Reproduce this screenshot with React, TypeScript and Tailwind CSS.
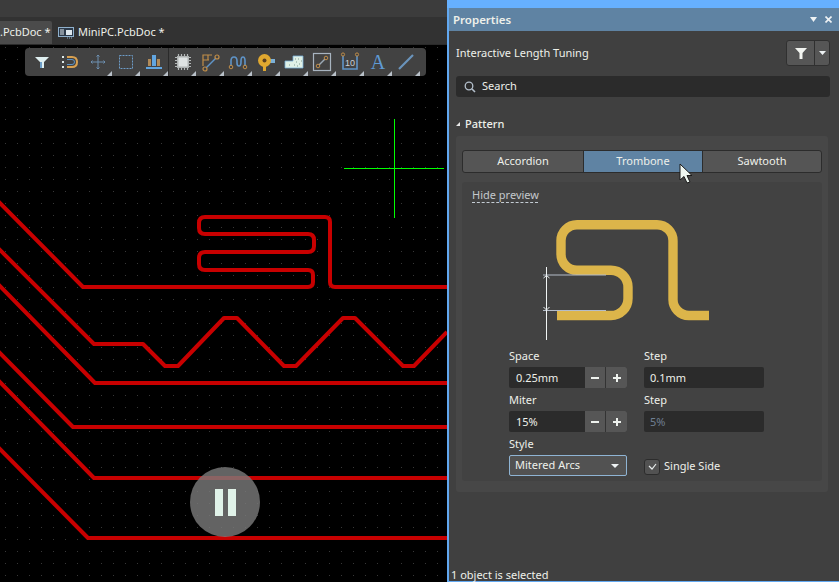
import { ReactNode } from 'react';

const traces = [
  'M-3 200 L83 287 H308 Q313 287 313 282 V275 Q313 270 308 270 H205 Q199 270 199 264 V258 Q199 252 205 252 H308 Q314 252 314 246 V240 Q314 234 308 234 H205 Q199 234 199 228 V223 Q199 217 205 217 H325 Q330 217 330 222 V282 Q330 287 335 287 H447',
  'M-3 247 L94 344 H143 L165 366 H178 L224 318 H237 L284 366 H296 L343 318 H355 L403 366 H414 L447 332',
  'M-3 283 L95 383 H447',
  'M-3 350 L73 427 H447',
  'M-3 379 L94 478 H447',
  'M-3 446 L88 538 H447',
];

function Tool({ children, menu = true, sep = false }: { children: ReactNode; menu?: boolean; sep?: boolean }) {
  return (
    <div className={`relative w-[28px] h-[28px] flex items-center justify-center ${sep ? 'border-l border-[#2a2a2a]' : ''}`}>
      <svg width="22" height="22" viewBox="0 0 22 22" fill="none">{children}</svg>
      {menu && (
        <svg width="5" height="5" viewBox="0 0 5 5" className="absolute right-0 bottom-0">
          <polygon points="5,0 5,5 0,5" fill="#b8c0c8" />
        </svg>
      )}
    </div>
  );
}

function Toolbar() {
  return (
    <div className="absolute left-[25px] top-[3px] w-[401px] h-[28px] pl-[3px] bg-[#424242] rounded-[4px] flex">
      <Tool menu={false}>
        <path d="M4 6 H18 L13 11 V17 H9 V11 Z" fill="#dfeff0" />
        <path d="M9 11 V17 H11 V11 Z" fill="#6f9fc8" />
      </Tool>
      <Tool menu={false}>
        <path d="M8 6 H13 Q18 6 18 11 Q18 16 13 16 H8" stroke="#d8a050" strokeWidth="2" />
        <path d="M8 8.5 H13 Q15.5 8.5 15.5 11 Q15.5 13.5 13 13.5 H8" stroke="#5b93c7" strokeWidth="1" />
        <path d="M3 6 H5 M3 11 H5 M3 16 H5" stroke="#dce8e8" strokeWidth="2" />
      </Tool>
      <Tool>
        <path d="M11 4 V18 M4 11 H18" stroke="#6d8fb0" strokeWidth="1" />
        <path d="M9.5 5.5 L11 4 L12.5 5.5 M9.5 16.5 L11 18 L12.5 16.5 M5.5 9.5 L4 11 L5.5 12.5 M16.5 9.5 L18 11 L16.5 12.5" stroke="#6d8fb0" strokeWidth="1" />
      </Tool>
      <Tool>
        <rect x="4.5" y="4.5" width="13" height="13" stroke="#6d9cc8" strokeDasharray="2 1" />
      </Tool>
      <Tool>
        <rect x="9" y="4" width="4" height="11" fill="#62a6e0" />
        <rect x="5" y="8" width="3" height="7" fill="#b08a58" />
        <rect x="14" y="8" width="3" height="7" fill="#b08a58" />
        <rect x="3" y="16" width="16" height="2" fill="#62a6e0" />
      </Tool>
      <Tool sep>
        <path d="M6.5 3 V19 M9.5 3 V19 M12.5 3 V19 M15.5 3 V19 M3 6.5 H19 M3 9.5 H19 M3 12.5 H19 M3 15.5 H19" stroke="#b4b8b8" strokeWidth="1.2" />
        <rect x="5" y="5" width="12" height="12" fill="#aeb2b2" />
        <rect x="6.5" y="6.5" width="9" height="9" fill="#dfe3e3" />
      </Tool>
      <Tool>
        <path d="M4 15 V4 H13 M4 9 H10 M9 4 V9" stroke="#c08d48" strokeWidth="1.2" />
        <path d="M7 17 L17 7" stroke="#5f94c8" strokeWidth="1.5" />
        <circle cx="6" cy="18" r="2" stroke="#c08d48" strokeWidth="1.2" />
        <circle cx="18" cy="6" r="2" stroke="#c08d48" strokeWidth="1.2" />
      </Tool>
      <Tool>
        <path d="M4 15 V10 Q4 6 7 6 Q10 6 10 10 V12 Q10 15 12 15 Q14 15 14 11 V10 Q14 6 16 6 Q18 6 18 10 V15" stroke="#5f94c8" strokeWidth="1.6" />
        <circle cx="4" cy="16" r="1.8" stroke="#c08d48" />
        <circle cx="18" cy="16" r="1.8" stroke="#c08d48" />
      </Tool>
      <Tool>
        <rect x="12" y="8" width="8" height="4" fill="#7ab0d8" />
        <rect x="8" y="12" width="3" height="8" fill="#e0a830" />
        <circle cx="9.5" cy="9.5" r="6.5" fill="#e0a830" />
        <circle cx="9.5" cy="9.5" r="2" fill="#5a4020" />
      </Tool>
      <Tool>
        <path d="M2 10 H10 V5 H20 V17 H2 Z" fill="#dff0e6" stroke="#7ab0d8" strokeWidth="0.8" />
        <path d="M12 8 h1 M15 8 h1 M18 10 h1 M13 11 h1 M16 13 h1 M11 14 h1 M6 14 h1 M14 15 h1" stroke="#7f9a90" />
      </Tool>
      <Tool>
        <rect x="2.5" y="2.5" width="17" height="17" stroke="#a8b4c0" strokeWidth="1.2" />
        <path d="M8 14 L14 8" stroke="#9aa8b4" strokeWidth="1.5" />
        <circle cx="7" cy="15" r="1.8" stroke="#c08d48" />
        <circle cx="15" cy="7" r="1.8" stroke="#c08d48" />
      </Tool>
      <Tool>
        <path d="M4 5 V18 H18 V5" stroke="#5f94c8" strokeWidth="1.6" />
        <circle cx="4" cy="3.5" r="1.6" stroke="#c08d48" />
        <circle cx="18" cy="3.5" r="1.6" stroke="#c08d48" />
        <text x="11" y="15" textAnchor="middle" fontSize="9" fill="#c8d0d8" className="font-['Liberation_Sans',sans-serif]">10</text>
      </Tool>
      <Tool>
        <text x="11" y="18" textAnchor="middle" fontSize="20" fill="#5f9ad4" className="font-['Liberation_Serif',serif]">A</text>
      </Tool>
      <Tool>
        <path d="M4 18 L18 4" stroke="#6a94bc" strokeWidth="2.2" />
      </Tool>
    </div>
  );
}

function Stepper({ value }: { value: string }) {
  return (
    <div className="flex h-[21px] bg-[#2b2b2b] rounded-[2px] overflow-hidden">
      <div className="flex-1 pl-[7px] leading-[21px]">{value}</div>
      <div className="w-[21px] bg-[#565656] flex items-center justify-center border-r border-[#333]">
        <div className="w-[8px] h-[2px] bg-[#eef2ee]" />
      </div>
      <div className="relative w-[21px] bg-[#565656] flex items-center justify-center">
        <div className="w-[8px] h-[2px] bg-[#eef2ee]" />
        <div className="absolute w-[2px] h-[8px] bg-[#eef2ee]" />
      </div>
    </div>
  );
}

function Label({ children }: { children: ReactNode }) {
  return <div className="h-[14px] mb-[4px] leading-[14px]">{children}</div>;
}

export default function App() {
  return (
    <div className="relative w-[839px] h-[582px] overflow-hidden flex bg-[#404040] text-[11px] text-[#eef0ea] font-['Noto_Sans',sans-serif]">
      {/* Editor */}
      <div className="w-[447px] h-full flex flex-col">
        <div className="h-[17px] bg-[#3c3c3c]" />
        <div className="h-[28px] bg-[#323232] flex items-end border-b border-[#2a2a2a]">
          <div className="w-[52px] h-[23px] bg-[#4b4b4b] rounded-tr-[2px] leading-[22px] text-right pr-[4px] whitespace-nowrap">.PcbDoc *</div>
          <div className="h-[23px] pl-[6px] flex items-center gap-[4px] whitespace-nowrap">
            <svg width="16" height="12" viewBox="0 0 16 12">
              <rect x="0.5" y="0.5" width="15" height="9" fill="#2c3a4a" stroke="#8fb0cc" />
              <path d="M2 3 H6 M2 5 H6 M2 7 H6" stroke="#dfe8ee" />
              <rect x="8" y="3" width="6" height="5" fill="#dfe8ee" />
              <path d="M9 11 H15" stroke="#8fb0cc" strokeDasharray="1 1" />
            </svg>
            MiniPC.PcbDoc *
          </div>
        </div>
        <div className="relative flex-1 bg-black">
          <svg width="447" height="537" viewBox="0 45 447 537" className="block">
            <defs>
              <pattern id="grid" x="5" y="11" width="12" height="12" patternUnits="userSpaceOnUse">
                <rect width="1" height="1" fill="#383838" />
              </pattern>
            </defs>
            <rect x="0" y="45" width="447" height="537" fill="url(#grid)" />
            {traces.map((d) => (
              <path key={d} d={d} fill="none" stroke="#c80000" strokeWidth="4" strokeLinejoin="round" />
            ))}
            <path d="M344 168.5 H444 M394.5 119 V218" stroke="#00ff00" strokeWidth="1" />
          </svg>
          <Toolbar />
          {/* Pause badge */}
          <div className="absolute left-[190px] top-[422px] w-[70px] h-[70px] rounded-full bg-[#7c7c7c]/80 flex items-center justify-center gap-[5px]">
            <div className="w-[8px] h-[27px] bg-[#e0f2e8]" />
            <div className="w-[8px] h-[27px] bg-[#e0f2e8]" />
          </div>
        </div>
      </div>

      {/* Properties panel */}
      <div className="w-[392px] h-full flex flex-col border-l-2 border-b border-[#62a8f0]">
        <div className="h-[8px] -ml-[2px] bg-[#66b0ff]" />
        <div className="h-[23px] bg-[#5f83a3] pl-[4px] pr-[7px] flex items-center justify-between">
          <span className="text-[11.5px] font-semibold">Properties</span>
          <span className="flex items-center gap-[8px]">
            <svg width="7" height="5" viewBox="0 0 7 5"><polygon points="0,0 7,0 3.5,5" fill="#eef2f4" /></svg>
            <svg width="7" height="7" viewBox="0 0 7 7"><path d="M0.5 0.5 L6.5 6.5 M6.5 0.5 L0.5 6.5" stroke="#eef2f4" strokeWidth="1.6" /></svg>
          </span>
        </div>

        <div className="pl-[7px] pr-[9px] flex-1 flex flex-col">
          <div className="mt-[9px] h-[26px] flex items-center justify-between">
            <span>Interactive Length Tuning</span>
            <div className="flex h-[26px] bg-[#565656] border border-[#303030] rounded-[3px]">
              <div className="w-[28px] flex items-center justify-center border-r border-[#303030]">
                <svg width="12" height="11" viewBox="0 0 12 11"><polygon points="0,0 12,0 7.5,5 7.5,11 4.5,11 4.5,5" fill="#f2f4f0" /></svg>
              </div>
              <div className="w-[14px] flex items-center justify-center">
                <svg width="7" height="4" viewBox="0 0 7 4"><polygon points="0,0 7,0 3.5,4" fill="#eef2f4" /></svg>
              </div>
            </div>
          </div>

          <div className="mt-[10px] h-[21px] bg-[#2b2b2b] rounded-[3px] flex items-center pl-[8px] gap-[6px]">
            <svg width="12" height="12" viewBox="0 0 12 12" fill="none">
              <circle cx="5" cy="5" r="3.8" stroke="#b4c0cc" strokeWidth="1.3" />
              <path d="M8 8 L11 11" stroke="#b4c0cc" strokeWidth="1.6" />
            </svg>
            Search
          </div>

          <div className="mt-[20px] h-[14px] flex items-center gap-[5px] font-medium">
            <svg width="4" height="4" viewBox="0 0 4 4"><polygon points="4,0 4,4 0,4" fill="#e8e8e8" /></svg>
            Pattern
          </div>

          <div className="mt-[5px] mr-[2px] h-[356px] bg-[#474747] rounded-[3px] pt-[14px] px-[6px]">
            <div className="h-[23px] grid grid-cols-[120px_120px_1fr] border border-[#2c2c2c] rounded-[3px] overflow-hidden text-center leading-[20px] bg-[#555555]">
              <div>Accordion</div>
              <div className="bg-[#5f83a3] border-x border-[#2c2c2c]">Trombone</div>
              <div>Sawtooth</div>
            </div>

            <div className="mt-[9px] h-[299px] bg-[#424242] rounded-[3px]">
              <div className="pt-[7px] pl-[10px]">
                <span className="block w-[66px] h-[14px] leading-[12px] border-b border-dashed border-[#c4ccd4] text-[#c4c8cc] whitespace-nowrap">Hide preview</span>
              </div>
              <svg width="360" height="140" viewBox="462 203 360 140" fill="none" className="block">
                <path
                  d="M557 315.5 H611 A17 17 0 0 0 628 298.5 V287 A17 17 0 0 0 611 270.3 H577 A16 16 0 0 1 561 254.3 V241 A16 16 0 0 1 577 224.7 H657 A16 16 0 0 1 673 241 V299 A16 16 0 0 0 689 315.5 H709"
                  stroke="#dcb54a"
                  strokeWidth="9.4"
                />
                <path d="M543 275 H606 M543 310.5 H606" stroke="#b4bcc8" strokeWidth="1.2" />
                <path d="M546.5 267 V340" stroke="#f0f4f4" strokeWidth="1" />
                <path d="M543.5 278 L546.5 275.5 L549.5 278 M543.5 307 L546.5 310 L549.5 307" stroke="#e8eef0" strokeWidth="1" />
              </svg>

              <div className="mt-[6px] ml-[47px] w-[255px] grid grid-cols-[118px_120px] gap-x-[17px]">
                <div>
                  <Label>Space</Label>
                  <Stepper value="0.25mm" />
                </div>
                <div>
                  <Label>Step</Label>
                  <div className="h-[21px] bg-[#2b2b2b] rounded-[2px] pl-[6px] leading-[21px]">0.1mm</div>
                </div>
                <div className="mt-[5px]">
                  <Label>Miter</Label>
                  <Stepper value="15%" />
                </div>
                <div className="mt-[5px]">
                  <Label>Step</Label>
                  <div className="h-[21px] bg-[#2b2b2b] rounded-[2px] pl-[6px] leading-[21px] text-[#6f7f92]">5%</div>
                </div>
                <div className="mt-[5px]">
                  <Label>Style</Label>
                  <div className="h-[21px] bg-[#525252] border border-[#8fb4d4] rounded-[2px] pl-[5px] pr-[7px] flex items-center justify-between">
                    Mitered Arcs
                    <svg width="8" height="4" viewBox="0 0 8 4"><polygon points="0,0 8,0 4,4" fill="#eef2f4" /></svg>
                  </div>
                </div>
                <div className="mt-[5px] pt-[20px] flex items-center gap-[4px]">
                  <div className="w-[16px] h-[16px] bg-[#525252] border border-[#2c2c2c] rounded-[3px] flex items-center justify-center">
                    <svg width="9" height="7" viewBox="0 0 9 7" fill="none"><path d="M1 3 L4 6 L8 1" stroke="#e8ecec" strokeWidth="1.2" /></svg>
                  </div>
                  Single Side
                </div>
              </div>
            </div>
          </div>

          <div className="mt-auto -ml-[5px] h-[13px] leading-[13px] whitespace-nowrap">1 object is selected</div>
        </div>
      </div>

      {/* Mouse pointer */}
      <svg width="14" height="22" viewBox="0 0 14 22" className="absolute left-[679px] top-[163px]">
        <path d="M1 1 V17 L5 13.5 L8 20 L11 19 L8 12.5 L13 12.5 Z" fill="#eef6f0" stroke="#1a1a1a" strokeWidth="1" />
      </svg>
    </div>
  );
}
